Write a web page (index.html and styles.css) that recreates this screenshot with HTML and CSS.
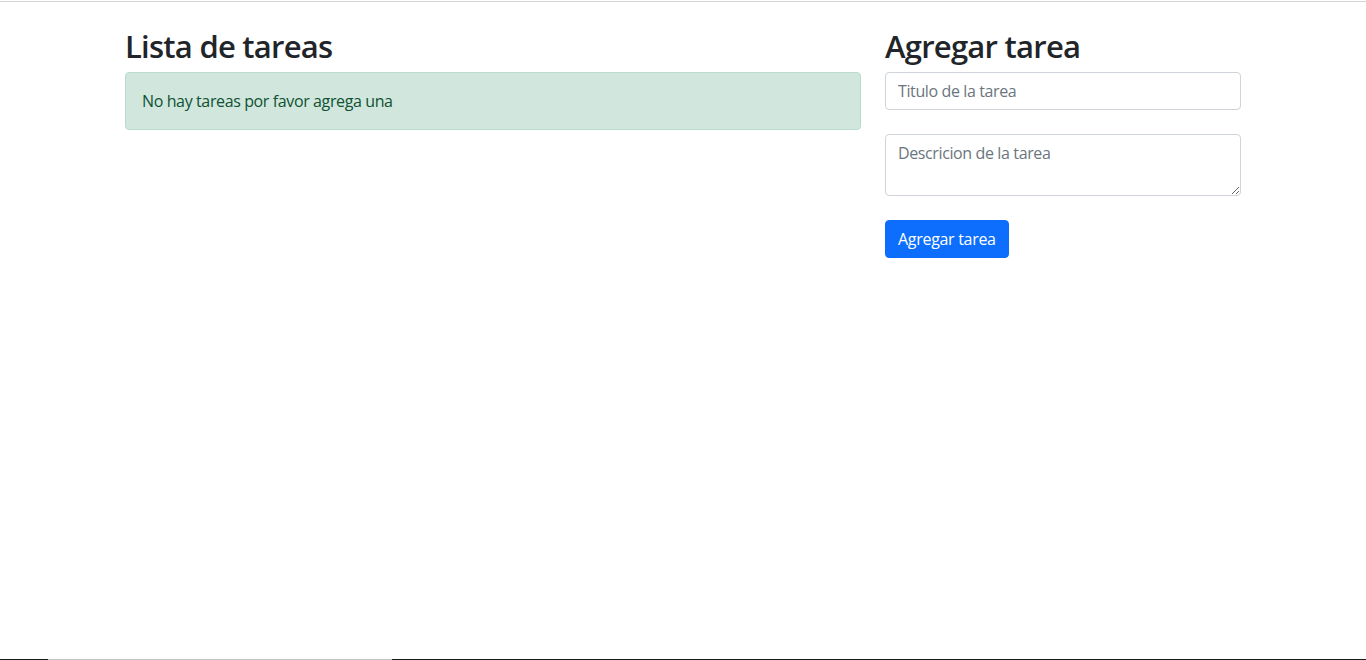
FILE: index.html
```html
<!DOCTYPE html>
<html lang="es">
<head>
<meta charset="utf-8">
<title>Lista de tareas</title>
<link rel="stylesheet" href="styles.css">
</head>
<body>
<div class="topline"></div>
<main class="container">
  <div class="row">
    <section class="col col-8">
      <h2 class="heading">Lista de tareas</h2>
      <div class="alert">No hay tareas por favor agrega una</div>
    </section>
    <section class="col col-4">
      <h2 class="heading">Agregar tarea</h2>
      <form class="task-form">
        <input class="form-control" type="text" placeholder="Titulo de la tarea">
        <textarea class="form-control" rows="2" placeholder="Descricion de la tarea"></textarea>
        <button class="btn" type="button">Agregar tarea</button>
      </form>
    </section>
  </div>
</main>
<div class="bottomline"></div>
</body>
</html>
```
FILE: styles.css
```css
*, *::before, *::after { box-sizing: border-box; }

html, body { margin: 0; padding: 0; }

body {
  min-height: 660px;
  display: flex;
  flex-direction: column;
  font-family: "Open Sans", "Noto Sans", sans-serif;
  font-size: 16px;
  line-height: 1.5;
  letter-spacing: -0.38px;
  color: #212529;
  background: #fff;
}

.topline {
  height: 2px;
  border-top: 1px solid #fff;
  background: #d4d4d4;
}

.container {
  flex: 1;
  width: 1140px;
  margin: 25px auto 0;
  padding: 0 12px;
}

.row {
  display: flex;
  margin: 0 -12px;
}

.col { padding: 0 12px; }
.col-8 { width: 66.6667%; }
.col-4 { width: 33.3333%; }

.heading {
  margin: 0 0 7px;
  font-size: 31px;
  font-weight: 600;
  line-height: 38px;
  letter-spacing: -0.75px;
  color: #212529;
}

.alert {
  padding: 16px;
  border: 1px solid #badbcc;
  border-radius: 4px;
  background: #d1e7dd;
  color: #0f5132;
}

.task-form {
  display: flex;
  flex-direction: column;
  align-items: flex-start;
  gap: 24px;
}

.form-control {
  display: block;
  width: 100%;
  margin: 0;
  padding: 6px 12px;
  font-family: inherit;
  font-size: 16px;
  line-height: 1.5;
  letter-spacing: -0.38px;
  color: #212529;
  background: #fff;
  border: 1px solid #ced4da;
  border-radius: 4px;
}

.form-control::placeholder { color: #6c757d; opacity: 1; }

textarea.form-control { height: 62px; resize: vertical; }

.btn {
  padding: 6px 12px;
  font-family: inherit;
  font-size: 16px;
  line-height: 1.5;
  letter-spacing: -0.3px;
  color: #fff;
  background: #0d6efd;
  border: 1px solid #0d6efd;
  border-radius: 4px;
}

.bottomline {
  height: 1px;
  background: linear-gradient(to right, #1a1a1a 0 48px, #c4c4c4 48px 392px, #1a1a1a 392px 100%);
}
```
